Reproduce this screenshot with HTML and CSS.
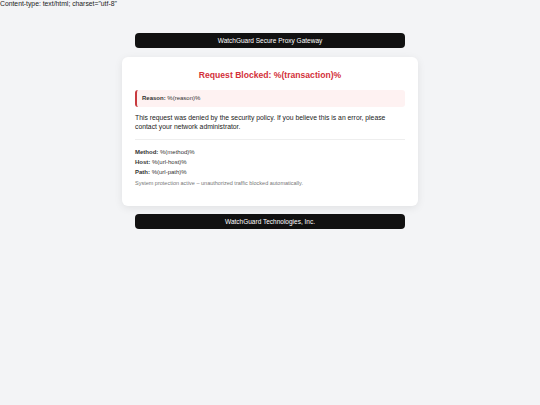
FILE: index.html
```html
<!DOCTYPE html>
<html>
<head>
<meta charset="utf-8">
<link rel="stylesheet" href="styles.css">
</head>
<body>
<div class="ctype">Content-type: text/html; charset="utf-8"</div>
<div class="wrap">
  <div class="bar header">WatchGuard Secure Proxy Gateway</div>
  <div class="card">
    <h1 class="title">Request Blocked: %(transaction)%</h1>
    <div class="reason"><b>Reason:</b> %(reason)%</div>
    <p class="msg">This request was denied by the security policy. If you believe this is an error, please contact your network administrator.</p>
    <div class="sep"></div>
    <div class="details">
      <div class="row"><b>Method:</b> %(method)%</div>
      <div class="row"><b>Host:</b> %(url-host)%</div>
      <div class="row"><b>Path:</b> %(url-path)%</div>
    </div>
    <div class="note">System protection active – unauthorized traffic blocked automatically.</div>
  </div>
  <div class="bar footer">WatchGuard Technologies, Inc.</div>
</div>
</body>
</html>
```

FILE: styles.css
```css
html, body {
  margin: 0;
  padding: 0;
}
body {
  background: #f3f4f6;
  font-family: "Liberation Sans", Arial, sans-serif;
  color: #222;
}
.ctype {
  font-size: 6.8px;
  line-height: 8px;
  color: #222;
}
.wrap {
  width: 296px;
  margin: 25px auto 0;
}
.bar {
  margin: 0 13px;
  height: 15px;
  background: #111;
  color: #fff;
  border-radius: 4px;
  font-size: 6.5px;
  line-height: 15px;
  text-align: center;
}
.card {
  margin: 9px 0 8px;
  background: #fff;
  border-radius: 6px;
  box-shadow: 0 2px 8px rgba(0,0,0,0.08);
  padding: 12px 13px 19px;
}
.title {
  margin: 0 0 9px;
  font-size: 8.6px;
  line-height: 12px;
  font-weight: bold;
  color: #d3313a;
  text-align: center;
}
.reason {
  background: #fef2f2;
  border-left: 2px solid #c83a3f;
  border-radius: 3px;
  padding: 4px 5px;
  font-size: 6px;
  line-height: 9px;
  color: #333;
}
.reason b { color: #333; }
.msg {
  margin: 6px 0 0;
  font-size: 6.8px;
  line-height: 9px;
  color: #222;
}
.sep {
  margin: 8px 0 7px;
  border-top: 1px solid #eee;
}
.row {
  font-size: 6px;
  line-height: 10px;
  color: #333;
}
.note {
  margin-top: 2px;
  font-size: 5.5px;
  line-height: 8px;
  color: #777;
}
```
